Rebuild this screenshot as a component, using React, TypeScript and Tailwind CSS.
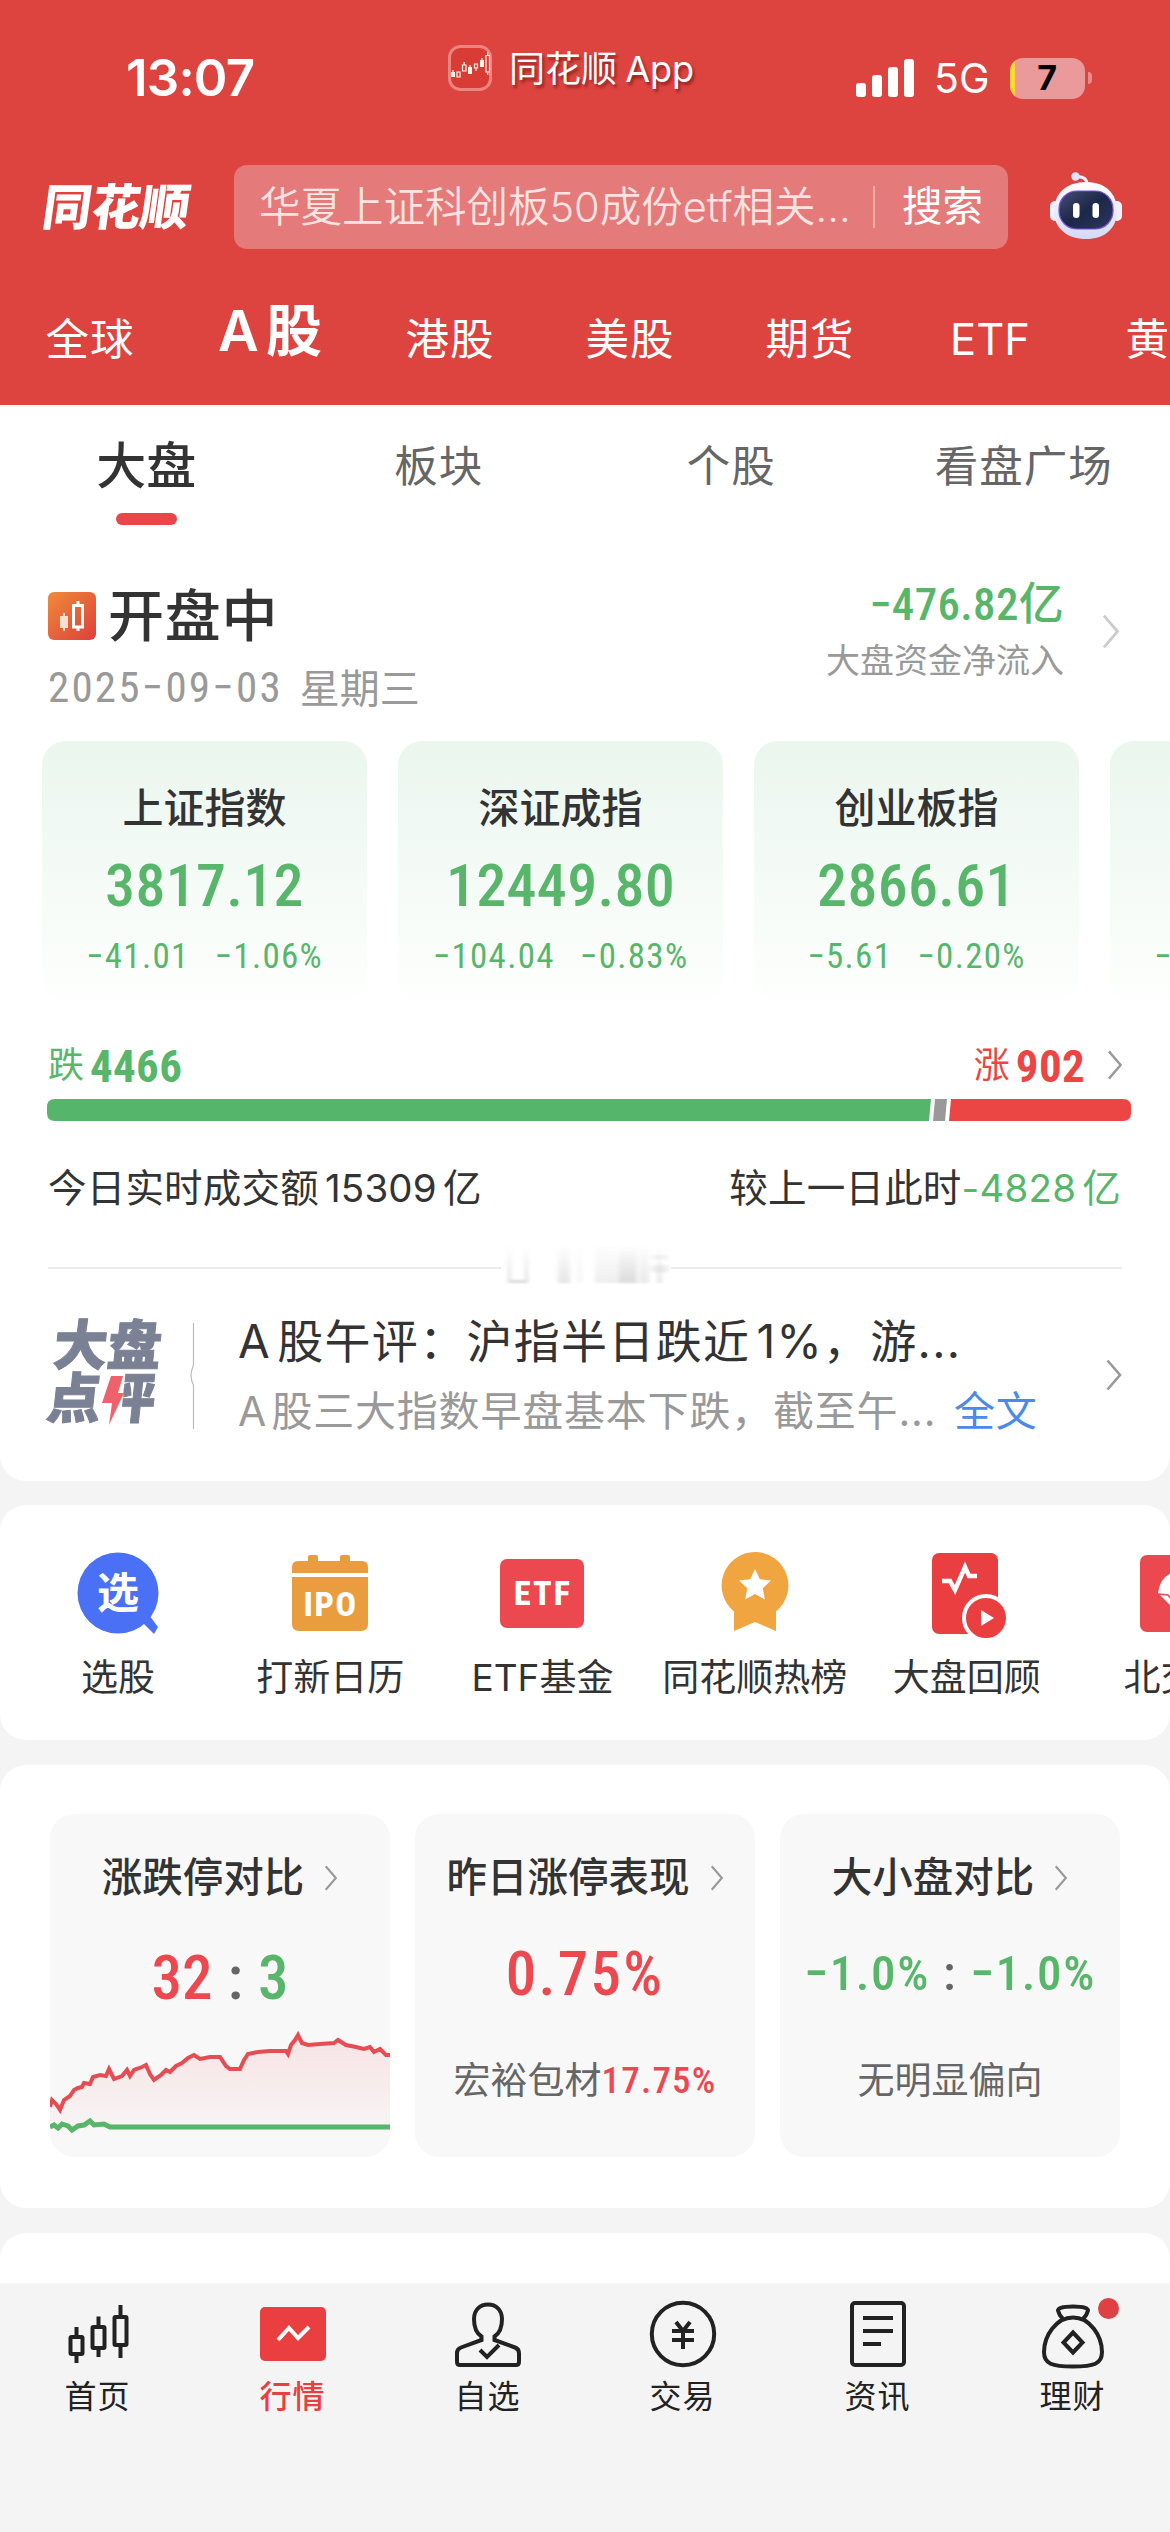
import type { ReactNode } from "react"
import clsx from "clsx"

const marketTabs = ["全球", "A 股", "港股", "美股", "期货", "ETF", "黄金"]

const subTabs = ["大盘", "板块", "个股", "看盘广场"]

const indices = [
  { name: "上证指数", price: "3817.12", change: "−41.01", percent: "−1.06%" },
  { name: "深证成指", price: "12449.80", change: "−104.04", percent: "−0.83%" },
  { name: "创业板指", price: "2866.61", change: "−5.61", percent: "−0.20%" },
  { name: "科创50", price: "1298.45", change: "−21.34", percent: "−1.62%" },
]

const numFont = "font-['Roboto_Condensed',Roboto,'Noto_Sans_CJK_SC',sans-serif]"

function Num({ className, children }: { className?: string; children: ReactNode }) {
  return <span className={clsx(numFont, "whitespace-nowrap", className)}>{children}</span>
}

function Chevron({ className }: { className?: string }) {
  return (
    <svg viewBox="0 0 16 32" fill="none" stroke="currentColor" strokeWidth="2.6" className={clsx("shrink-0", className)}>
      <path d="M1.5 1.5 14 16 1.5 30.5" />
    </svg>
  )
}

function StatusBar() {
  return (
    <div className="flex h-[145px] pt-[44px] text-white">
      <div className="w-[448px] pl-[126px]">
        <span className="text-[51px] leading-[68px] font-semibold tracking-[-0.8px]">13:07</span>
      </div>
      <div className="flex w-[408px] items-start">
        <svg viewBox="0 0 44 46" className="mt-px h-[46px] w-[44px]">
          <rect x="1.5" y="1.5" width="41" height="43" rx="11" fill="#d93c35" stroke="#ec8580" strokeWidth="3" />
          <g fill="#fff4e8">
            <rect x="3" y="27" width="4" height="5" />
            <rect x="20" y="22" width="4" height="7" />
            <rect x="32" y="15" width="4" height="7" />
          </g>
          <g fill="none" stroke="#fff4e8" strokeWidth="1.2">
            <path d="M9 27h3v5H9zM14.500 20h3.500v6h-3.500zM16.200 17v3M26.500 19h3v4h-3zM28 23v3M38 10.500h3.500v16.500H38zM39.700 7v3.500M39.700 27v3M5 25v2M22 20v2M34 13v2" />
          </g>
        </svg>
        <span className="ml-[17px] text-[36px] leading-[50px] [text-shadow:2px_3px_3px_rgba(90,10,10,0.55)] [word-spacing:-2px]">
          同花顺 App
        </span>
      </div>
      <div className="flex h-[68px] items-center">
        <svg viewBox="0 0 58 38" fill="#fff" className="h-[38px] w-[58px]">
          <rect x="0" y="24" width="10" height="14" rx="3" />
          <rect x="16" y="16" width="10" height="22" rx="3" />
          <rect x="32" y="8" width="10" height="30" rx="3" />
          <rect x="48" y="0" width="10" height="38" rx="3" />
        </svg>
        <span className="ml-[20px] text-[41px] leading-none">5G</span>
        <div className="ml-[20px] flex h-[41px] w-[75px] items-center justify-center overflow-hidden rounded-[13px] bg-[linear-gradient(90deg,#fbd93a_5px,#ea9a9b_5px)]">
          <span className="text-[34px] leading-none font-bold text-black">7</span>
        </div>
        <div className="ml-[3px] h-[12px] w-[4px] rounded-r-full bg-[#e88b8b]" />
      </div>
    </div>
  )
}

function Robot() {
  return (
    <svg viewBox="0 0 72 68" className="h-[68px] w-[72px]">
      <defs>
        <linearGradient id="shell" x1="0" y1="0" x2="0" y2="1">
          <stop offset="0" stopColor="#fff" />
          <stop offset="1" stopColor="#d3daf7" />
        </linearGradient>
        <linearGradient id="visor" x1="0" y1="0" x2="1" y2="1">
          <stop offset="0" stopColor="#454d75" />
          <stop offset="0.5" stopColor="#1d2748" />
          <stop offset="1" stopColor="#2c3760" />
        </linearGradient>
      </defs>
      <path d="M27 5q10-1 10 8" fill="none" stroke="#eeeefa" strokeWidth="3.200" />
      <circle cx="25.500" cy="4.500" r="4.200" fill="#dfe3fb" />
      <rect x="0" y="29" width="10" height="20" rx="5" fill="#eef0fc" />
      <rect x="62" y="29" width="10" height="20" rx="5" fill="#eef0fc" />
      <path d="M36 10C55 10 67 21 67 39c0 18-13 28-31 28S4 57 4 39c0-18 13-29 32-29z" fill="url(#shell)" />
      <rect x="9" y="19" width="54" height="38" rx="18" fill="url(#visor)" stroke="#7a4fe0" strokeWidth="1.200" />
      <rect x="23" y="31" width="6.500" height="15" rx="3.200" fill="#fff" />
      <rect x="42.500" y="31" width="6.500" height="15" rx="3.200" fill="#fff" />
    </svg>
  )
}

function Header() {
  return (
    <header className="h-[405px] bg-[#dd4440]">
      <StatusBar />
      <div className="flex h-[124px] items-center text-white">
        <div className="w-[192px] shrink-0 pl-[43px]">
          <span className="inline-block -skew-x-8 text-[49px] leading-none font-black tracking-[0px] whitespace-nowrap">同花顺</span>
        </div>
        <div className="ml-[42px] flex h-[84px] w-[774px] items-center rounded-[13px] bg-[#e47a79]">
          <span className="ml-[25px] w-[614px] text-[41.5px] font-[350] whitespace-nowrap text-[#fbe3e2]">
            华夏上证科创板50成份etf相关...
          </span>
          <span className="h-[42px] w-[2px] bg-[#eeaaa9]" />
          <span className="ml-[27px] text-[40.5px]">搜索</span>
        </div>
        <div className="-mt-[3px] ml-[42px]">
          <Robot />
        </div>
      </div>
      <nav className="flex h-[136px] w-[1260px] items-center text-white">
        {marketTabs.map((tab, i) => (
          <span
            key={tab}
            className={clsx(
              "w-[180px] text-center whitespace-nowrap",
              i === 1 && "-mt-[12px] text-[56px] font-semibold [word-spacing:-7px]",
              i !== 1 && "mt-[6px] text-[43.5px]",
              i !== 1 && tab !== "ETF" && "tracking-[1px]"
            )}
          >
            {tab}
          </span>
        ))}
      </nav>
    </header>
  )
}

function IndexCard({ name, price, change, percent }: (typeof indices)[number]) {
  return (
    <div className="flex h-[264px] w-[325px] shrink-0 flex-col items-center rounded-[24px] bg-linear-to-b from-[#eaf6ee] to-[#fefffe] pt-[39px]">
      <h3 className="text-[41px] leading-[56px] font-medium text-[#333]">{name}</h3>
      <Num className="mt-[20px] text-[60px] leading-[60px] font-medium tracking-[0.300px] text-[#58b66a]">{price}</Num>
      <div className="mt-[23px] flex gap-[25px] text-[35px] leading-[36px] tracking-[1.300px] text-[#58b66a]">
        <Num>{change}</Num>
        <Num>{percent}</Num>
      </div>
    </div>
  )
}

function Breadth() {
  return (
    <svg viewBox="0 0 1084 22" className="mt-[6px] ml-[47px] block h-[22px] w-[1084px]">
      <path d="M8 0H884L882 22H8Q0 22 0 14V8Q0 0 8 0Z" fill="#55b56a" />
      <path d="M888 0h12l-2 22h-12z" fill="#999" />
      <path d="M904 0h172q8 0 8 8v6q0 8-8 8H902z" fill="#eb4643" />
    </svg>
  )
}

function TickerGhost() {
  return (
    <svg viewBox="0 0 170 46" className="h-[46px] w-[170px]">
      <defs>
        <filter id="soft" x="-10%" y="-10%" width="120%" height="120%">
          <feGaussianBlur stdDeviation="2 1.200" />
        </filter>
        <linearGradient id="fade" gradientUnits="userSpaceOnUse" x1="0" y1="0" x2="0" y2="40">
          <stop offset="0" stopColor="#888" stopOpacity="0" />
          <stop offset="1" stopColor="#888" stopOpacity="0.320" />
        </linearGradient>
      </defs>
      <rect width="170" height="46" fill="#fff" />
      <g filter="url(#soft)" fill="url(#fade)">
        <path d="M7 2h3v33h14V2h3v36H7z" />
        <rect x="57" y="2" width="12" height="36" opacity="0.700" />
        <rect x="76" y="2" width="5" height="36" opacity="0.300" />
        <rect x="94" y="2" width="24" height="36" opacity="0.450" />
        <rect x="118" y="2" width="18" height="36" />
        <rect x="138" y="2" width="10" height="36" opacity="0.600" />
        <rect x="150" y="10" width="18" height="4" />
        <rect x="150" y="20" width="18" height="7" opacity="0.700" />
        <rect x="156" y="4" width="5" height="34" opacity="0.700" />
      </g>
    </svg>
  )
}

function Review() {
  return (
    <div className="flex h-[215px] pt-[30px]">
      <div className="relative ml-[48px] h-[120px] w-[120px] pt-[8px] font-black text-[#7b8195]">
        <div className="-skew-x-6 text-[54px] leading-[53px] whitespace-nowrap [-webkit-text-stroke:1px_#7b8195]">
          <div className="ml-[3px]">大盘</div>
          <div className="ml-[2px]">
            点<span className="inline-block [clip-path:inset(0_0_0_40%)]">评</span>
          </div>
        </div>
        <svg viewBox="0 0 22 50" className="absolute top-[65px] left-[54px] h-[50px] w-[22px]">
          <path d="M9 0h12l-5 17h6L7 49l3-22H0z" fill="#f0626b" />
        </svg>
      </div>
      <svg viewBox="0 0 6 106" fill="none" stroke="#bbb" strokeWidth="1.200" className="mt-[12px] ml-[21px] h-[106px] w-[6px]">
        <path d="M4.500 0v42q-5 11 0 20v44" />
      </svg>
      <div className="-mt-[3px] ml-[43px] w-[868px] whitespace-nowrap">
        <div className="text-[46px] leading-[66px] tracking-[1.300px] text-[#333] [word-spacing:-8px]">
          A 股午评：沪指半日跌近 1%，游...
        </div>
        <div className="mt-[4px] flex text-[41px] leading-[66px] tracking-[0.800px] text-[#999] [word-spacing:-8px]">
          <span className="w-[716px]">A 股三大指数早盘基本下跌，截至午...</span>
          <span className="text-[#4b8aea]">全文</span>
        </div>
      </div>
      <Chevron className="mt-[48px] h-[32px] w-[16px] text-[#999]" />
    </div>
  )
}

function MarketPanel() {
  return (
    <section className="h-[1076px] overflow-hidden rounded-b-[26px] bg-white">
      <div className="grid h-[130px] grid-cols-4 text-center">
        {subTabs.map((tab, i) => (
          <div key={tab} className="flex flex-col items-center pt-[28px]">
            <span
              className={clsx(
                "leading-[66px] whitespace-nowrap",
                i === 0 ? "text-[50px] font-medium text-[#333]" : "text-[43.5px] tracking-[1px] text-[#666]"
              )}
            >
              {tab}
            </span>
            {i === 0 && <span className="mt-[14px] h-[12px] w-[61px] rounded-full bg-[#ea464a]" />}
          </div>
        ))}
      </div>

      <div className="flex h-[206px] items-start justify-between pr-[50px] pl-[48px]">
        <div className="pt-[45px]">
          <div className="flex items-center gap-[12px]">
            <svg viewBox="0 0 48 48" className="h-[48px] w-[48px]">
              <defs>
                <linearGradient id="open" x1="0" y1="0" x2="1" y2="1">
                  <stop offset="0" stopColor="#ef8b3a" />
                  <stop offset="1" stopColor="#dd3f3b" />
                </linearGradient>
              </defs>
              <rect width="48" height="48" rx="6" fill="url(#open)" />
              <path d="M12 24h8v12h-8zM15 21h2v18h-2z" fill="#fbe0d2" />
              <path d="M25.500 13.500h9v21.500h-9zM30 9v4M30 35v4" fill="none" stroke="#fff" strokeWidth="3" />
            </svg>
            <h2 className="text-[56px] leading-[72px] font-medium tracking-[0.800px] text-[#333]">开盘中</h2>
          </div>
          <div className="flex items-center gap-[17px] text-[#999]">
            <Num className="text-[43px] leading-[66px] tracking-[2.200px]">2025−09−03</Num>
            <span className="mt-[4px] text-[40px] leading-[66px]">星期三</span>
          </div>
        </div>
        <div className="flex items-center gap-[38px] pt-[38px]">
          <div className="flex flex-col items-end">
            <Num className="text-[45px] leading-[64px] font-medium tracking-[0.300px] text-[#58b66a]">−476.82亿</Num>
            <span className="text-[34px] leading-[48px] text-[#999]">大盘资金净流入</span>
          </div>
          <Chevron className="mt-[5px] h-[35px] w-[18px] text-[#ccc]" />
        </div>
      </div>

      <div className="flex w-[1500px] gap-[31px] pl-[42px]">
        {indices.map((item) => (
          <IndexCard key={item.name} {...item} />
        ))}
      </div>

      <div className="mt-[32px] flex h-[56px] items-center justify-between pr-[47px] pl-[48px] text-[36px]">
        <div className="flex items-center gap-[6px] text-[#58b66a]">
          跌<Num className="mt-[2px] text-[45px] leading-none font-bold tracking-[0.300px]">4466</Num>
        </div>
        <div className="flex items-center gap-[6px] text-[#eb4643]">
          涨<Num className="mt-[2px] text-[45px] leading-none font-bold tracking-[0.300px]">902</Num>
          <Chevron className="ml-[16px] h-[30px] w-[16px] text-[#999]" />
        </div>
      </div>
      <Breadth />

      <div className="flex h-[134px] items-center justify-between pt-[2px] pr-[49px] pl-[48px] text-[38.5px] tracking-[0.200px] text-[#333] [word-spacing:-5px]">
        <span>今日实时成交额 15309 亿</span>
        <span>
          较上一日此时<span className="text-[#58b66a]">-4828 亿</span>
        </span>
      </div>

      <div className="flex h-[26px] items-center px-[48px] text-[#ebebeb]">
        <div className="h-[2px] flex-1 bg-current" />
        <TickerGhost />
        <div className="h-[2px] w-[451px] bg-current" />
      </div>
      <Review />
    </section>
  )
}

const shortcuts = [
  {
    label: "选股",
    icon: (
      <>
        <circle cx="45" cy="45" r="40.500" fill="#4a70f6" />
        <path d="M70 75l6-8 9 12-4 7z" fill="#4a70f6" />
        <text x="45" y="60" textAnchor="middle" fontSize="42" fontWeight="700" fill="#fff">
          选
        </text>
      </>
    ),
  },
  {
    label: "打新日历",
    icon: (
      <g fill="#e99d3e">
        <path d="M7 25v-6q0-6 6-6h10V9q0-2 2-2h6q2 0 2 2v4h22V9q0-2 2-2h6q2 0 2 2v4h12q6 0 6 6v6zM7 29h76v47q0 7-7 7H14q-7 0-7-7z" />
        <text
          x="45.500"
          y="68"
          textAnchor="middle"
          fontSize="34"
          fontWeight="800"
          letterSpacing="1.500"
          fill="#fff"
          className="font-['Roboto_Condensed',Roboto]"
        >
          IPO
        </text>
      </g>
    ),
  },
  {
    label: "ETF基金",
    icon: (
      <>
        <rect x="3" y="11" width="84" height="69" rx="7" fill="#eb4850" />
        <text
          x="46"
          y="57"
          textAnchor="middle"
          fontSize="34"
          fontWeight="800"
          letterSpacing="2"
          fill="#fff"
          className="font-['Roboto_Condensed',Roboto]"
        >
          ETF
        </text>
      </>
    ),
  },
  {
    label: "同花顺热榜",
    icon: (
      <>
        <path d="M45 4a33.500 33.500 0 0 1 21 59.500V83L45 74 24 83V63.500A33.500 33.500 0 0 1 45 4z" fill="#f1a541" />
        <path d="M45 21l4.800 10.300 11.200 1.300-8.300 7.700 2.200 11.200L45 46l-9.900 5.500 2.200-11.200-8.300-7.700 11.200-1.300z" fill="#fff" />
      </>
    ),
  },
  {
    label: "大盘回顾",
    icon: (
      <>
        <rect x="10" y="5" width="66" height="81" rx="7" fill="#ea3f41" />
        <path d="M20 33h8l5 9 10-23 4 9h8" fill="none" stroke="#fff" strokeWidth="4.500" />
        <circle cx="64" cy="70" r="22" fill="#ea3f41" stroke="#fff" strokeWidth="4" />
        <path d="M59 62l13 8-13 8z" fill="#fff" />
      </>
    ),
  },
  {
    label: "北交所",
    icon: (
      <>
        <rect x="6" y="7" width="78" height="77" rx="7" fill="#eb4850" />
        <path d="M45 66L24 45q2-17 17-21h8q15 4 17 21z" fill="#fff" />
        <path d="M24 46l10 1 11 14" fill="none" stroke="#eb4850" strokeWidth="1.500" />
      </>
    ),
  },
]

function Shortcuts() {
  return (
    <section className="mt-[24px] h-[235px] overflow-hidden rounded-[26px] bg-white">
      <div className="flex w-[1300px] pt-[43px] pl-[12px]">
        {shortcuts.map(({ label, icon }) => (
          <div key={label} className="flex w-[212.200px] shrink-0 flex-col items-center">
            <svg viewBox="0 0 90 90" className="h-[90px] w-[90px]">
              {icon}
            </svg>
            <span className="mt-[13px] text-[37px] leading-[54px] whitespace-nowrap text-[#333]">{label}</span>
          </div>
        ))}
      </div>
    </section>
  )
}

const riseLine =
  "M0 69L2 62 6 66 10 72 14 62 20 58 24 52 28 50 32 49 34 45 40 46 43 39 50 37 56 38 59 31 64 41 72 38 77 32 80 38 84 32 92 29 96 27 100 36 104 42 111 37 116 32 120 34 126 28 132 25 138 20 144 17 150 21 160 19 170 19 176 28 180 31 190 31 194 22 198 16 208 14 220 13 236 13 238 16 241 7 245 2 248 -3 252 5 258 7 270 6 284 5 288 2 296 7 306 9 314 11 320 9 324 14 330 11 336 17 340 17"

function StatCard({ title, children }: { title: string; children: ReactNode }) {
  return (
    <div className="flex h-[343px] w-[340px] flex-col items-center overflow-hidden rounded-[24px] bg-[#f8f8f8] pt-[35px]">
      <h3 className="flex items-center gap-[20px] text-[40.500px] leading-[58px] font-medium whitespace-nowrap text-[#333]">
        {title}
        <Chevron className="h-[26px] w-[14px] text-[#999]" />
      </h3>
      {children}
    </div>
  )
}

function Stats() {
  return (
    <section className="mt-[25px] h-[443px] rounded-[26px] bg-white">
      <div className="flex gap-[25px] pt-[49px] pl-[50px]">
        <StatCard title="涨跌停对比">
          <Num className="mt-[36px] flex gap-[15px] text-[61px] leading-[70px] font-medium text-[#eb4850]">
            <span>32</span>
            <span className="text-[#666]">:</span>
            <span className="text-[#58b66a]">3</span>
          </Num>
          <svg viewBox="0 0 340 110" fill="none" className="mt-[14px] block h-[110px] w-[340px] overflow-visible">
            <defs>
              <linearGradient id="rise" x1="0" y1="0" x2="0" y2="1">
                <stop offset="0" stopColor="#eb4850" stopOpacity="0.120" />
                <stop offset="1" stopColor="#eb4850" stopOpacity="0.020" />
              </linearGradient>
            </defs>
            <g transform="translate(0 11)">
              <path d={`${riseLine}V90H0Z`} fill="url(#rise)" />
              <path d={riseLine} stroke="#e64d52" strokeWidth="4" />
              <path
                d="M0 89L4 87 8 90 12 86 18 88 22 92 28 88 34 87 40 83 44 87 54 86 60 89H340"
                stroke="#58b66a"
                strokeWidth="5"
              />
            </g>
          </svg>
        </StatCard>
        <StatCard title="昨日涨停表现">
          <Num className="mt-[32px] text-[61px] leading-[70px] font-medium tracking-[2.200px] text-[#eb4850]">0.75%</Num>
          <div className="mt-[45px] flex items-center text-[37px] leading-[54px] text-[#666]">
            宏裕包材<Num className="font-medium tracking-[1.200px] text-[#eb4850]">17.75%</Num>
          </div>
        </StatCard>
        <StatCard title="大小盘对比">
          <Num className="mt-[32px] flex gap-[13px] text-[49px] leading-[70px] font-medium tracking-[1.600px] text-[#58b66a]">
            <span>−1.0%</span>
            <span className="text-[#666]">:</span>
            <span>−1.0%</span>
          </Num>
          <span className="mt-[45px] text-[37px] leading-[54px] text-[#666]">无明显偏向</span>
        </StatCard>
      </div>
    </section>
  )
}

const navItems = [
  {
    label: "首页",
    icon: (
      <>
        <rect x="7.500" y="27" width="12" height="17" rx="1" />
        <rect x="29.500" y="17" width="12" height="21" rx="1" />
        <rect x="51.500" y="7" width="12" height="28" rx="1" />
        <path d="M13.500 17v10M13.500 44v9M35.500 6.500v10M35.500 38v9M57.500-5v12M57.500 35v13" />
      </>
    ),
  },
  {
    label: "行情",
    active: true,
    icon: (
      <>
        <rect x="2" y="-3" width="66" height="54" rx="5" fill="#ea3f41" stroke="none" />
        <path d="M20 30l11-12 9 10 11-11" stroke="#fff" />
      </>
    ),
  },
  {
    label: "自选",
    icon: (
      <>
        <path d="M28.500 26.500C23 23 21 18 21 9c0-9 6-14.500 14-14.500S49 0 49 9c0 9-2 14-7.500 17.500V30L62 37.500q4 1.500 4 5.500v9q0 3-3 3H7q-3 0-3-3v-9q0-4 4-5.500L28.500 30z" />
        <path d="M27 40l7 7 12-12" />
      </>
    ),
  },
  {
    label: "交易",
    icon: (
      <>
        <circle cx="35" cy="24" r="31.200" />
        <path d="M28 12l7 9 7-9M24 21h22M24 30h22M35 21v18" />
      </>
    ),
  },
  {
    label: "资讯",
    icon: (
      <>
        <rect x="9" y="-7" width="52" height="62" rx="3" />
        <path d="M20 8h30M20 21h30M20 34h18" />
      </>
    ),
  },
  {
    label: "理财",
    badge: true,
    icon: (
      <>
        <path d="M25 9q-4-4-5-8.500 0-4 15-4t15 4Q49 5 45 9" />
        <path d="M35 7.500C52 7.500 64 26 64 42c0 12-8 14.500-29 14.500S6 54 6 42C6 26 18 7.500 35 7.500z" />
        <path d="M35 22.500l9.500 10-9.500 10-9.500-10z" />
      </>
    ),
  },
]

function BottomNav() {
  return (
    <nav className="grid h-[249px] grid-cols-6 bg-[#f4f4f4] pt-[24px]">
      {navItems.map(({ label, icon, active, badge }) => (
        <div key={label} className="relative flex flex-col items-center">
          <svg
            viewBox="0 -10 70 70"
            fill="none"
            stroke="#222"
            strokeWidth="4"
            className="-mt-[7px] h-[70px] w-[70px] overflow-visible"
          >
            {icon}
          </svg>
          <span
            className={clsx(
              "mt-[4px] text-[32px] leading-[46px] tracking-[1px]",
              active ? "font-medium text-[#ea3f41]" : "text-[#222]"
            )}
          >
            {label}
          </span>
          {badge && <span className="absolute -top-[9px] left-[123px] h-[21px] w-[21px] rounded-full bg-[#df4143]" />}
        </div>
      ))}
    </nav>
  )
}

export default function App() {
  return (
    <div className="h-[2532px] w-[1170px] overflow-hidden bg-[#f4f4f4] font-[Inter,'Noto_Sans_CJK_SC',sans-serif]">
      <Header />
      <MarketPanel />
      <Shortcuts />
      <Stats />
      <section className="mt-[25px] h-[50px] rounded-t-[26px] bg-white" />
      <BottomNav />
    </div>
  )
}
